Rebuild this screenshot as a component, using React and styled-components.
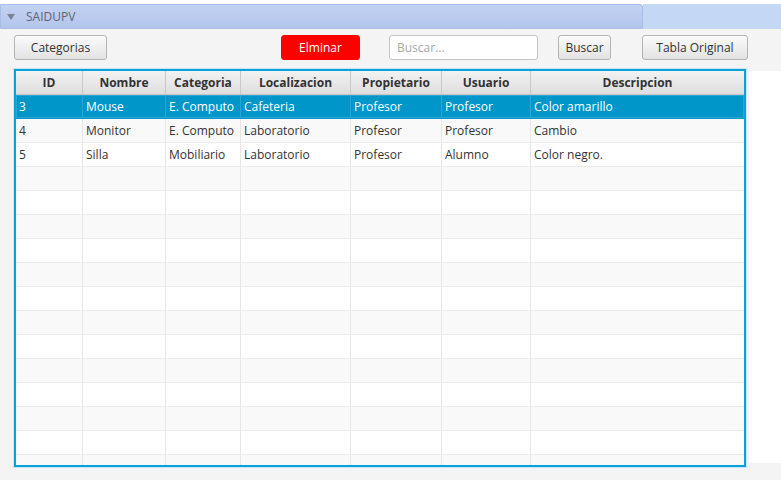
import React from 'react';
import styled, { createGlobalStyle } from 'styled-components';

const GlobalStyle = createGlobalStyle`
  html, body {
    margin: 0;
    padding: 0;
    background: #fff;
  }
  body {
    font-family: "Open Sans", "Noto Sans", "Liberation Sans", sans-serif;
    font-size: 12px;
    color: #333;
  }
`;

const Window = styled.div`
  width: 781px;
  height: 480px;
  padding-top: 4px;
  box-sizing: border-box;
  background: #fff;
  overflow: hidden;
  display: flex;
  flex-direction: column;
`;

const TitleRow = styled.div`
  display: flex;
  height: 25px;
  flex-shrink: 0;
`;

const TitleTab = styled.div`
  width: 643px;
  box-sizing: border-box;
  display: flex;
  align-items: center;
  gap: 11px;
  padding-left: 6px;
  background: linear-gradient(#c2d2f2, #b3c5ec);
  border: 1px solid #a9bde6;
  border-radius: 0 3px 0 0;
  color: #62646f;
  font-size: 12px;
`;

const Arrow = styled.span`
  width: 0;
  height: 0;
  border-left: 4px solid transparent;
  border-right: 4px solid transparent;
  border-top: 6px solid #7c8396;
  margin-top: 1px;
`;

const TitleFill = styled.div`
  flex: 1;
  background: #c4d7f5;
`;

const Body = styled.div`
  flex: 1;
  background: #f4f4f4;
  display: flex;
  flex-direction: column;
`;

const Toolbar = styled.div`
  display: flex;
  align-items: center;
  height: 40px;
  padding: 0 0 4px 14px;
  box-sizing: border-box;
`;

const Button = styled.button`
  height: 25px;
  box-sizing: border-box;
  width: ${p => p.w}px;
  margin-left: ${p => p.ml || 0}px;
  font-family: inherit;
  font-size: 12px;
  color: ${p => (p.danger ? '#fff' : '#333')};
  background: ${p => (p.danger ? '#ff0000' : 'linear-gradient(#fbfbfb, #e2e2e2)')};
  border: 1px solid ${p => (p.danger ? '#ff0000' : '#b4b4b4')};
  border-radius: 3px;
  padding: 0;
`;

const SearchInput = styled.input`
  width: 149px;
  height: 25px;
  box-sizing: border-box;
  margin-left: 29px;
  border: 1px solid #c4c4c4;
  border-radius: 3px;
  background: #fff;
  font-family: inherit;
  font-size: 12px;
  padding: 0 7px;
  outline: none;
  &::placeholder {
    color: #a8a8a8;
  }
`;

const ContentRow = styled.div`
  display: flex;
  align-items: flex-start;
  padding-left: 14px;
`;

const TableBox = styled.div`
  width: 732px;
  height: 398px;
  box-sizing: border-box;
  border: 2px solid #0aa2dc;
  box-shadow: 0 0 0 1px rgba(10, 162, 220, 0.18);
  background: #fff;
  overflow: hidden;
`;

const SidePane = styled.div`
  flex: 1;
  height: 392px;
  margin: 2px 0 0 3px;
  background: #fff;
`;

const cols = '67px 83px 75px 110px 91px 89px 1fr';

const HeaderRow = styled.div`
  display: grid;
  grid-template-columns: ${cols};
  height: 24px;
  background: linear-gradient(#f2f2f2, #dedede);
  border-bottom: 1px solid #c6c6c6;
  box-sizing: border-box;
`;

const HeaderCell = styled.div`
  display: flex;
  align-items: center;
  justify-content: center;
  font-weight: bold;
  color: #333;
  border-right: 1px solid #c8c8c8;
  &:last-child {
    border-right: none;
  }
`;

const Row = styled.div`
  display: grid;
  grid-template-columns: ${cols};
  height: 24px;
  box-sizing: border-box;
  background: ${p => (p.selected ? '#0096c9' : p.odd ? '#f9f9f9' : '#fff')};
  border-bottom: 1px solid ${p => (p.selected ? '#0096c9' : '#ebebeb')};
  box-shadow: ${p => (p.selected ? 'inset 0 0 0 1px #2aa6d4' : 'none')};
`;

const Cell = styled.div`
  display: flex;
  align-items: center;
  padding-left: 3px;
  white-space: nowrap;
  overflow: hidden;
  color: ${p => (p.selected ? '#fff' : '#333')};
  border-right: 1px solid ${p => (p.selected ? '#2aa6d4' : '#e6e6e6')};
  &:last-child {
    border-right: none;
  }
`;

const headers = ['ID', 'Nombre', 'Categoria', 'Localizacion', 'Propietario', 'Usuario', 'Descripcion'];

const data = [
  ['3', 'Mouse', 'E. Computo', 'Cafeteria', 'Profesor', 'Profesor', 'Color amarillo'],
  ['4', 'Monitor', 'E. Computo', 'Laboratorio', 'Profesor', 'Profesor', 'Cambio'],
  ['5', 'Silla', 'Mobiliario', 'Laboratorio', 'Profesor', 'Alumno', 'Color negro.'],
];

const rows = Array.from({ length: 17 }, (_, i) => data[i] || headers.map(() => ''));

export default function App() {
  return (
    <Window>
      <GlobalStyle />
      <TitleRow>
        <TitleTab>
          <Arrow />
          SAIDUPV
        </TitleTab>
        <TitleFill />
      </TitleRow>
      <Body>
        <Toolbar>
          <Button w={93}>Categorias</Button>
          <Button w={79} ml={174} danger>Elminar</Button>
          <SearchInput placeholder="Buscar..." />
          <Button w={53} ml={20}>Buscar</Button>
          <Button w={106} ml={31}>Tabla Original</Button>
        </Toolbar>
        <ContentRow>
          <TableBox>
            <HeaderRow>
              {headers.map(h => (
                <HeaderCell key={h}>{h}</HeaderCell>
              ))}
            </HeaderRow>
            {rows.map((r, i) => (
              <Row key={i} selected={i === 0} odd={i % 2 === 1}>
                {r.map((c, j) => (
                  <Cell key={j} selected={i === 0}>{c}</Cell>
                ))}
              </Row>
            ))}
          </TableBox>
          <SidePane />
        </ContentRow>
      </Body>
    </Window>
  );
}
